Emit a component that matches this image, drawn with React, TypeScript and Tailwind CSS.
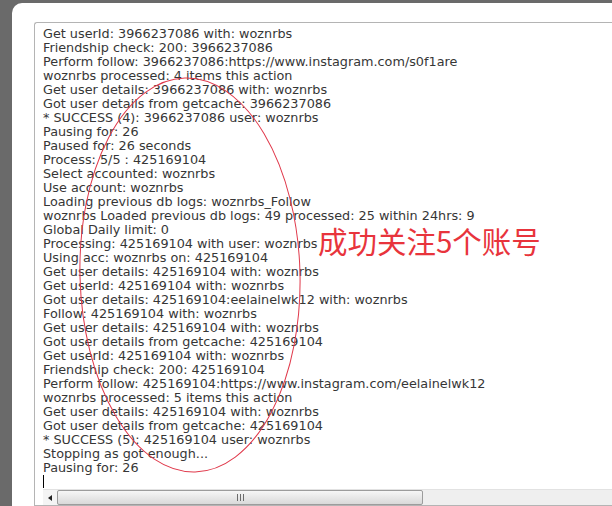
import React from "react";

const lines = [
  "Get userId: 3966237086 with: woznrbs",
  "Friendship check: 200: 3966237086",
  "Perform follow: 3966237086:https://www.instagram.com/s0f1are",
  "woznrbs processed: 4 items this action",
  "Get user details: 3966237086 with: woznrbs",
  "Got user details from getcache: 3966237086",
  "* SUCCESS (4): 3966237086 user: woznrbs",
  "Pausing for: 26",
  "Paused for: 26 seconds",
  "Process: 5/5 : 425169104",
  "Select accounted: woznrbs",
  "Use account: woznrbs",
  "Loading previous db logs: woznrbs_Follow",
  "woznrbs Loaded previous db logs: 49 processed: 25 within 24hrs: 9",
  "Global Daily limit: 0",
  "Processing: 425169104 with user: woznrbs",
  "Using acc: woznrbs on: 425169104",
  "Get user details: 425169104 with: woznrbs",
  "Get userId: 425169104 with: woznrbs",
  "Got user details: 425169104:eelainelwk12 with: woznrbs",
  "Follow: 425169104 with: woznrbs",
  "Get user details: 425169104 with: woznrbs",
  "Got user details from getcache: 425169104",
  "Get userId: 425169104 with: woznrbs",
  "Friendship check: 200: 425169104",
  "Perform follow: 425169104:https://www.instagram.com/eelainelwk12",
  "woznrbs processed: 5 items this action",
  "Get user details: 425169104 with: woznrbs",
  "Got user details from getcache: 425169104",
  "* SUCCESS (5): 425169104 user: woznrbs",
  "Stopping as got enough...",
  "Pausing for: 26",
];

export default function App() {
  return (
    <div className="relative w-[612px] h-[506px] overflow-hidden bg-[#6a6a6a] pt-[3px] pl-[12px]">
      <div className="w-[640px] h-[503px] bg-white rounded-tl-[10px] pl-[22px] pt-[19px]">
        <div className="w-[640px] border-l border-t border-b border-[#b4b4b4] rounded-tl-[3px] pt-[4px] pl-[8px]">
          <div
            className="text-[12.8px] leading-[14px] text-[#363636] whitespace-nowrap"
            style={{ fontFamily: '"DejaVu Sans", Verdana, sans-serif' }}
          >
            {lines.map((l, i) => (
              <div key={i} className="h-[14px]">
                {l}
              </div>
            ))}
            <div className="h-[13px] flex items-start">
              <div className="w-px h-[13px] bg-black" />
            </div>
          </div>
          <div className="mt-[1px] h-[16px] flex bg-[#efefef] border-t border-[#e2e2e2]">
            <div className="w-[14px] h-full flex items-center justify-center bg-[#f4f4f4]">
              <div className="w-0 h-0 border-t-[3px] border-b-[3px] border-r-[4px] border-t-transparent border-b-transparent border-r-[#222]" />
            </div>
            <div className="w-[366px] h-[15px] rounded-[2px] border border-[#9c9c9c] bg-gradient-to-b from-[#f6f6f6] to-[#d9d9d9] flex items-center justify-center gap-[2px]">
              <div className="w-px h-[7px] bg-[#6b6b6b]" />
              <div className="w-px h-[7px] bg-[#6b6b6b]" />
              <div className="w-px h-[7px] bg-[#6b6b6b]" />
            </div>
            <div className="flex-1 bg-[#efefef]" />
          </div>
        </div>
      </div>

      <svg
        className="absolute left-0 top-0 pointer-events-none"
        width="612"
        height="506"
        viewBox="0 0 612 506"
      >
        <ellipse
          cx="190"
          cy="275"
          rx="110"
          ry="197"
          fill="none"
          stroke="#e0394b"
          strokeWidth="1"
          transform="rotate(-1.5 190 275)"
        />
      </svg>

      <div
        className="absolute left-[318px] top-[226px] text-[29.5px] leading-none text-[#e8343c] whitespace-nowrap"
        style={{ fontFamily: '"Noto Sans CJK SC", sans-serif' }}
      >
        成功关注5个账号
      </div>
    </div>
  );
}
